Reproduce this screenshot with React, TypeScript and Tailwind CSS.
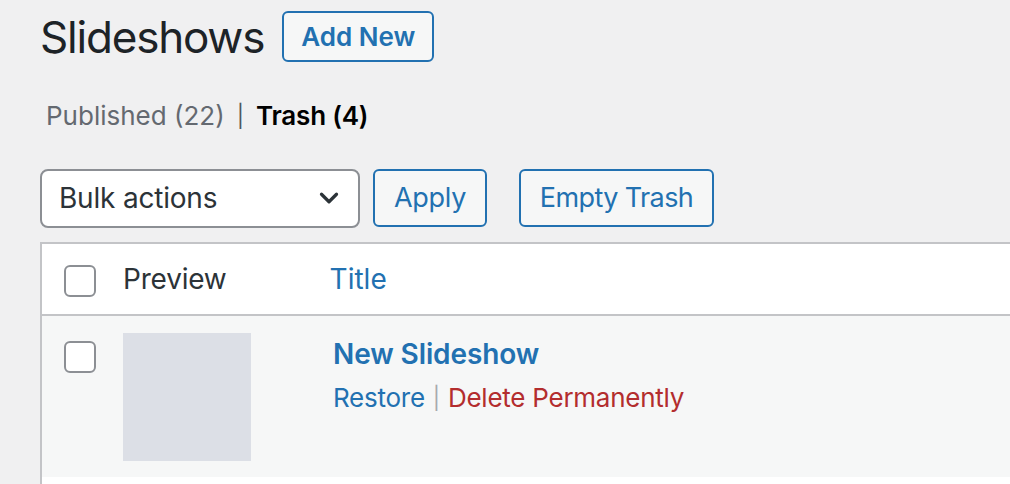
import { ChevronDown } from 'lucide-react';

const font = "font-['Inter','Liberation_Sans',sans-serif]";

function Checkbox() {
  return <div className="w-[32px] h-[32px] rounded-[6px] border-2 border-[#8c8f94] bg-white" />;
}

export default function App() {
  return (
    <div className={`w-[1010px] h-[484px] overflow-hidden bg-[#f0f0f1] pl-[40px] ${font}`}>
      {/* title row */}
      <div className="flex items-center gap-[18px] pt-[11px]">
        <h1 className="text-[44px] leading-[46px] font-normal text-[#1d2327] tracking-[-1.2px]">Slideshows</h1>
        <button className="h-[51px] px-[17px] rounded-[6px] border-2 border-[#2271b1] bg-[#f6f7f7] text-[#2271b1] text-[26px] font-semibold leading-none">
          Add New
        </button>
      </div>

      {/* status filters */}
      <div className="mt-[41px] flex items-center h-[26px] text-[26px] leading-[26px] pl-[6px]">
        <span className="text-[#646970]">Published (22)</span>
        <span className="text-[#50575e] text-[22px] mx-[12px]">|</span>
        <span className="text-black font-semibold tracking-[-0.2px]">Trash (4)</span>
      </div>

      {/* toolbar */}
      <div className="mt-[40px] flex items-center h-[58px]">
        <div className="w-[320px] h-[59px] rounded-[8px] border-2 border-[#8c8f94] bg-white flex items-center justify-between pl-[17px] pr-[14px]">
          <span className="text-[28px] text-[#2c3338] tracking-[-0.2px]">Bulk actions</span>
          <ChevronDown size={30} strokeWidth={2.6} className="text-[#2c3338]" />
        </div>
        <button className="ml-[13px] w-[114px] h-[58px] rounded-[6px] border-2 border-[#2271b1] bg-[#f6f7f7] text-[#2271b1] text-[27px] tracking-[-0.3px]">
          Apply
        </button>
        <button className="ml-[32px] w-[195px] h-[58px] rounded-[6px] border-2 border-[#2271b1] bg-[#f6f7f7] text-[#2271b1] text-[27px] tracking-[-0.6px]">
          Empty Trash
        </button>
      </div>

      {/* table */}
      <div className="mt-[15px] w-[1000px] border-l-2 border-t-2 border-[#c3c4c7] bg-white">
        <div className="h-[72px] flex items-center border-b-2 border-[#c3c4c7] pl-[22px]">
          <div className="mt-[4px]"><Checkbox /></div>
          <span className="ml-[27px] text-[28px] text-[#2c3338] tracking-[-0.2px]">Preview</span>
          <span className="ml-[103px] text-[28px] text-[#2271b1]">Title</span>
        </div>
        <div className="h-[161px] bg-[#f6f7f7] flex items-start pl-[22px]">
          <div className="mt-[25px]"><Checkbox /></div>
          <div className="ml-[27px] mt-[17px] w-[128px] h-[128px] bg-[#dcdfe6]" />
          <div className="ml-[82px] mt-[24px]">
            <div className="text-[28px] leading-[28px] font-semibold text-[#2271b1] tracking-[-0.1px]">New Slideshow</div>
            <div className="mt-[17px] text-[26px] leading-[26px] flex items-center tracking-[-0.25px]">
              <span className="text-[#2271b1]">Restore</span>
              <span className="text-[#a7aaad] text-[22px] mx-[8px]">|</span>
              <span className="text-[#b32d2e]">Delete Permanently</span>
            </div>
          </div>
        </div>
        <div className="h-[40px] bg-white" />
      </div>
    </div>
  );
}
